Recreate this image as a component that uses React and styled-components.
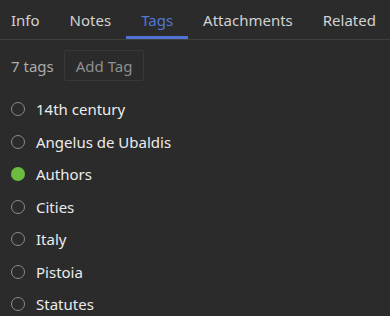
import React, { useState } from 'react';
import styled, { createGlobalStyle } from 'styled-components';

const GlobalStyle = createGlobalStyle`
  html, body {
    margin: 0;
    padding: 0;
    background: #2b2b2b;
  }
  body {
    font-family: "Segoe UI", "Noto Sans", "Open Sans", sans-serif;
    -webkit-font-smoothing: antialiased;
  }
`;

const Panel = styled.div`
  width: 390px;
  height: 316px;
  overflow: hidden;
  background: #2b2b2b;
  color: #e4e4e4;
`;

const TabBar = styled.div`
  display: flex;
  height: 39px;
  border-bottom: 1px solid #3f3f3f;
  white-space: nowrap;
`;

const Tab = styled.div`
  display: flex;
  align-items: center;
  padding: 0 15px;
  font-size: 15px;
  color: ${p => (p.$active ? '#5078d8' : '#d2d2d2')};
  box-shadow: ${p => (p.$active ? 'inset 0 -3px 0 #4f74d6' : 'none')};
  cursor: pointer;
  &:first-child {
    padding-left: 11px;
  }
`;

const Toolbar = styled.div`
  display: flex;
  align-items: center;
  gap: 10px;
  padding: 10px 11px 0;
`;

const Count = styled.span`
  font-size: 15px;
  color: #ababab;
`;

const AddButton = styled.button`
  height: 31px;
  padding: 0 11px;
  background: transparent;
  border: 1px solid #383838;
  border-radius: 2px;
  font-family: inherit;
  font-size: 15px;
  color: #8f8f8f;
`;

const TagList = styled.ul`
  list-style: none;
  margin: 12px 0 0;
  padding: 0 11px;
`;

const TagRow = styled.li`
  display: flex;
  align-items: center;
  gap: 11px;
  height: 32.5px;
  font-size: 15px;
  color: #ebebeb;
`;

const Dot = styled.span`
  box-sizing: border-box;
  width: 14px;
  height: 14px;
  border-radius: 50%;
  flex: none;
  border: ${p => (p.$on ? 'none' : '1.5px solid #8a8a8a')};
  background: ${p => (p.$on ? '#6cbd3f' : 'transparent')};
`;

const tabs = ['Info', 'Notes', 'Tags', 'Attachments', 'Related'];
const tags = [
  { name: '14th century' },
  { name: 'Angelus de Ubaldis' },
  { name: 'Authors', on: true },
  { name: 'Cities' },
  { name: 'Italy' },
  { name: 'Pistoia' },
  { name: 'Statutes' },
];

export default function App() {
  const [active, setActive] = useState('Tags');
  return (
    <Panel>
      <GlobalStyle />
      <TabBar>
        {tabs.map(t => (
          <Tab key={t} $active={t === active} onClick={() => setActive(t)}>
            {t}
          </Tab>
        ))}
      </TabBar>
      <Toolbar>
        <Count>{tags.length} tags</Count>
        <AddButton>Add Tag</AddButton>
      </Toolbar>
      <TagList>
        {tags.map(t => (
          <TagRow key={t.name}>
            <Dot $on={t.on} />
            {t.name}
          </TagRow>
        ))}
      </TagList>
    </Panel>
  );
}
